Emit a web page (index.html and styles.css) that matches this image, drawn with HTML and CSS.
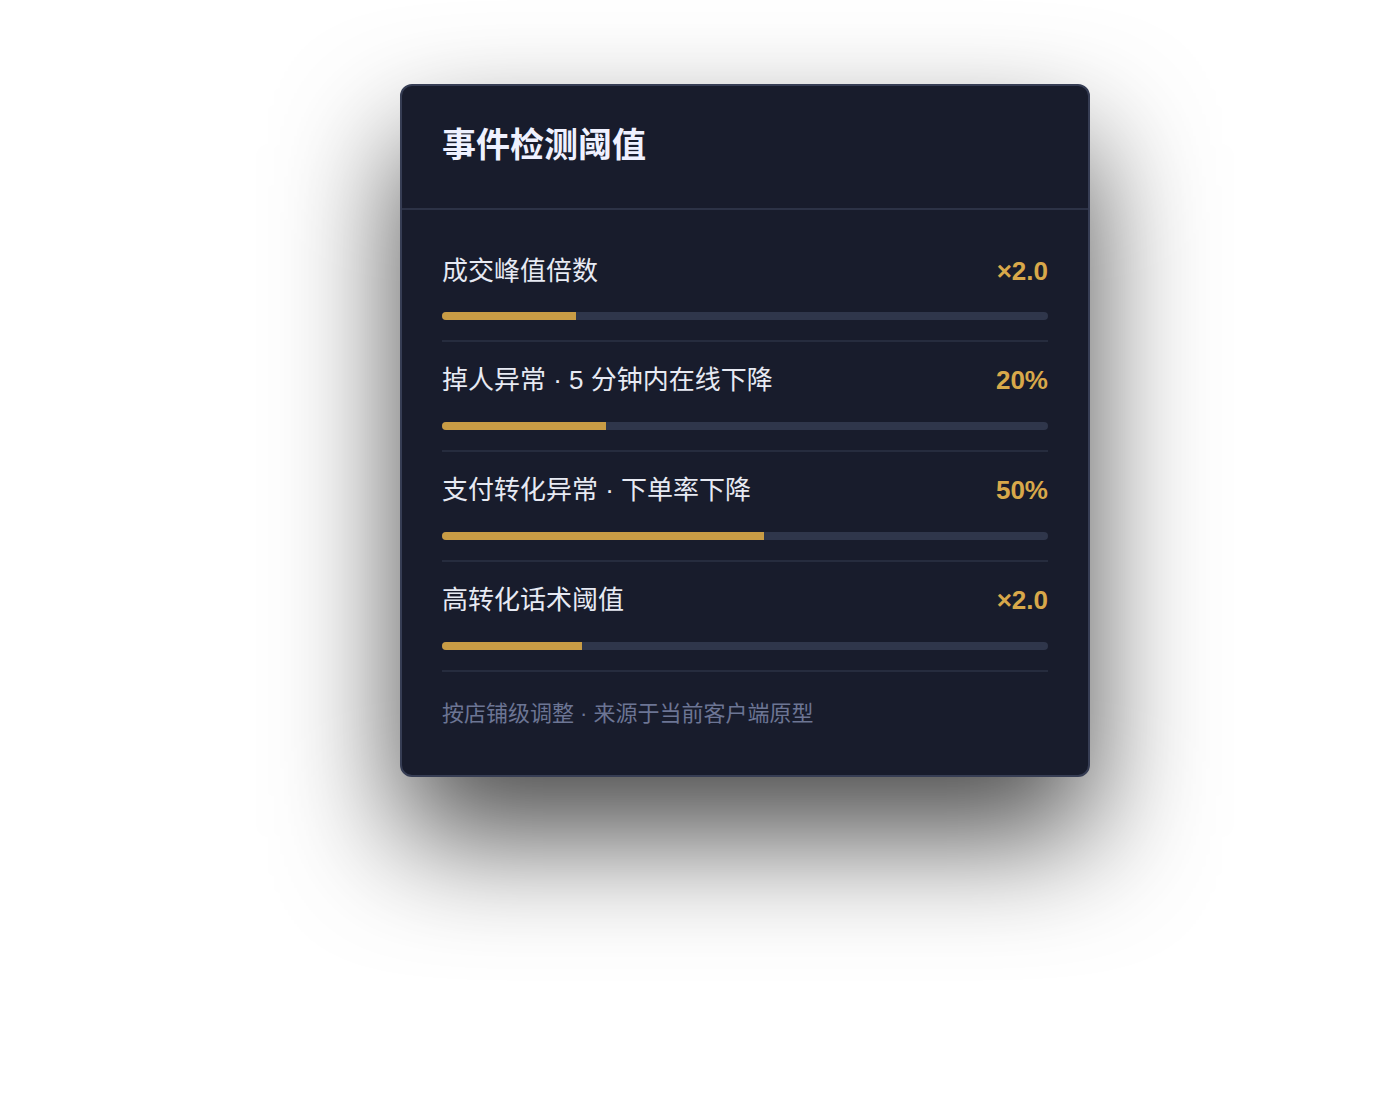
FILE: index.html
```
<!DOCTYPE html>
<html lang="zh-CN">
<head>
<meta charset="utf-8">
<title>事件检测阈值</title>
<link rel="stylesheet" href="styles.css">
</head>
<body>
<main class="stage">
  <section class="panel">
    <header class="panel-head">
      <h1 class="panel-title">事件检测阈值</h1>
    </header>
    <div class="panel-body">
      <div class="metric">
        <div class="metric-top">
          <span class="metric-label">成交峰值倍数</span>
          <span class="metric-value">×2.0</span>
        </div>
        <div class="track"><div class="fill" style="width: 22.1%"></div></div>
      </div>
      <div class="metric">
        <div class="metric-top">
          <span class="metric-label">掉人异常 · 5 分钟内在线下降</span>
          <span class="metric-value">20%</span>
        </div>
        <div class="track"><div class="fill" style="width: 27%"></div></div>
      </div>
      <div class="metric">
        <div class="metric-top">
          <span class="metric-label">支付转化异常 · 下单率下降</span>
          <span class="metric-value">50%</span>
        </div>
        <div class="track"><div class="fill" style="width: 53.1%"></div></div>
      </div>
      <div class="metric">
        <div class="metric-top">
          <span class="metric-label">高转化话术阈值</span>
          <span class="metric-value">×2.0</span>
        </div>
        <div class="track"><div class="fill" style="width: 23.1%"></div></div>
      </div>
      <p class="panel-note">按店铺级调整 · 来源于当前客户端原型</p>
    </div>
  </section>
</main>
</body>
</html>
```

FILE: styles.css
```
* {
  box-sizing: border-box;
}

html,
body {
  margin: 0;
  background: #ffffff;
}

body {
  font-family: "Liberation Sans", "Noto Sans CJK SC", sans-serif;
}

.stage {
  display: flex;
  align-items: flex-start;
  padding: 84px 0 0 400px;
  min-height: 1120px;
}

.panel {
  width: 690px;
  background: #181c2c;
  border: 2px solid #363d54;
  border-radius: 12px;
  box-shadow: 0 60px 120px rgba(0, 0, 0, 0.7);
  overflow: hidden;
}

.panel-head {
  padding: 37px 40px 41px;
  border-bottom: 2px solid #2c3246;
}

.panel-title {
  margin: 0;
  font-size: 34px;
  line-height: 44px;
  font-weight: 700;
  color: #eff1ff;
}

.panel-body {
  padding: 22px 40px 46px;
}

.metric {
  padding: 20px 0 20px;
  border-bottom: 2px solid #262c3e;
}

.metric:first-child {
  padding-top: 21px;
}

.metric:first-child .track {
  margin-top: 23px;
}

.metric-top {
  display: flex;
  justify-content: space-between;
  align-items: center;
  height: 36px;
}

.metric-label {
  font-size: 26px;
  line-height: 36px;
  color: #e7eaf3;
}

.metric-value {
  font-size: 26px;
  line-height: 36px;
  font-weight: 700;
  color: #d8a84a;
}

.track {
  margin-top: 24px;
  height: 8px;
  border-radius: 4px;
  background: #2f364b;
  overflow: hidden;
}

.fill {
  height: 100%;
  background: #c99c45;
}

.panel-note {
  margin: 0;
  padding-top: 27px;
  font-size: 22px;
  line-height: 30px;
  color: #6c7594;
}
```
